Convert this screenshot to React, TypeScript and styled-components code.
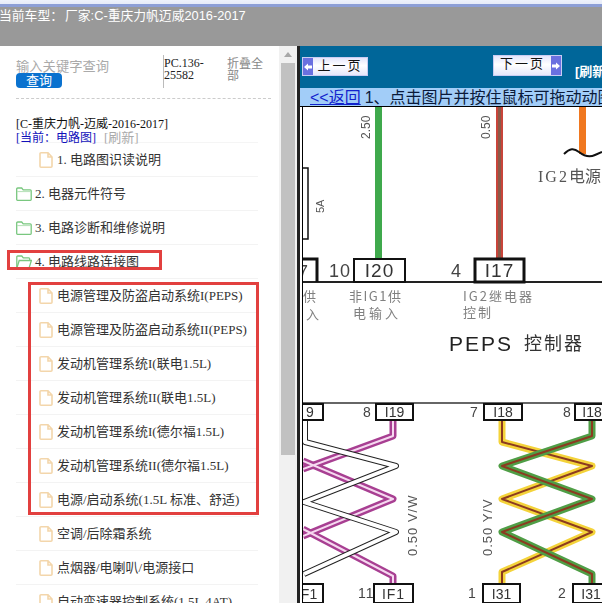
import React from "react";
import styled, { createGlobalStyle } from "styled-components";

const Global = createGlobalStyle`
  html, body { margin: 0; padding: 0; background: #fff; }
  * { box-sizing: border-box; }
`;

const SERIF = `"Liberation Serif", "Noto Sans CJK SC", serif`;
const SANS = `"Liberation Sans", "Noto Sans CJK SC", sans-serif`;

const Page = styled.div`
  width: 602px;
  height: 603px;
  overflow: hidden;
  display: flex;
  flex-direction: column;
  background: #fff;
  font-family: ${SERIF};
`;

const TopStrip = styled.div`
  height: 7px;
  flex: none;
  background: linear-gradient(#eef2fb 0, #e6ebf8 4px, #8d9fd6 4px, #8d9fd6 7px);
`;

const TopBar = styled.div`
  height: 39px;
  flex: none;
  background: #999;
  color: #fff;
  font: 12.8px/15px ${SANS};
  padding: 1px 0 0;
  white-space: nowrap;
  overflow: hidden;
`;

const TopLabel = styled.span`
  margin-left: -1px;
  display: inline-block;
  width: 66px;
`;

const Main = styled.div`
  flex: 1;
  min-height: 0;
  display: flex;
`;

const Sidebar = styled.aside`
  width: 279px;
  flex: none;
  position: relative;
  overflow: hidden;
  padding: 0 0 0 16px;
`;

const SearchRow = styled.div`
  display: flex;
  height: 52px;
  border-bottom: 1px dashed #ccc;
  width: 255px;
  box-sizing: content-box;
`;

const SearchBox = styled.div`
  width: 147px;
  padding-top: 14px;
  display: flex;
  flex-direction: column;
  align-items: flex-start;
`;

const SearchInput = styled.input`
  border: 0;
  padding: 0;
  margin: 0;
  width: 130px;
  height: 13px;
  outline: none;
  font: 13.3px/13px ${SANS};
  &::placeholder { color: #aaa; opacity: 1; }
`;

const SearchButton = styled.button`
  width: 46px;
  height: 15px;
  border: 0;
  padding: 0;
  border-radius: 4px;
  background: #0a72cf;
  color: #fff;
  font: 13px/15px ${SANS};
`;

const CodeCell = styled.div`
  width: 64px;
  height: 33px;
  margin-top: 9px;
  padding-top: 2px;
  border-left: 1px solid #bbb;
  font: 12px/12px ${SERIF};
  color: #222;
`;

const CollapseCell = styled.div`
  width: 38px;
  margin-top: 12px;
  font: 12px/12px ${SANS};
  color: #888;
`;

const Crumbs = styled.div`
  margin-top: 19px;
  height: 24px;
  font: 12px/13px ${SERIF};
  color: #111;
  white-space: nowrap;
`;

const Current = styled.span`
  color: #1111bb;
`;

const Refresh = styled.span`
  color: #aaa;
  margin-left: 8px;
  font-size: 13px;
`;

const Tree = styled.div`
  width: 242px;
  border-top: 1px solid #f5f5f5;
`;

const Row = styled.div<{ $leaf?: boolean }>`
  height: 34px;
  display: flex;
  align-items: center;
  padding-left: ${(p) => (p.$leaf ? "23px" : "0")};
  gap: ${(p) => (p.$leaf ? "4px" : "3px")};
  border-bottom: 1px solid #f3f3f3;
  font: 13px/16px ${SERIF};
  color: #333;
  white-space: nowrap;
`;

const Highlight = styled.div<{ $x: number; $y: number; $w: number; $h: number }>`
  position: absolute;
  left: ${(p) => p.$x}px;
  top: ${(p) => p.$y}px;
  width: ${(p) => p.$w}px;
  height: ${(p) => p.$h}px;
  border: 3px solid #e2403f;
`;

const Scrollbar = styled.div`
  width: 18px;
  flex: none;
  background: #f1f1f1;
  padding: 0 2px;
  display: flex;
  flex-direction: column;
`;

const ScrollUp = styled.div`
  height: 17px;
  display: flex;
  align-items: center;
  justify-content: center;
  &::before {
    content: "";
    border-left: 4px solid transparent;
    border-right: 4px solid transparent;
    border-bottom: 5px solid #a8a8a8;
  }
`;

const ScrollThumb = styled.div`
  height: 392px;
  background: #c1c1c1;
`;

const Splitter = styled.div`
  width: 3px;
  flex: none;
  background: #222;
`;

const Content = styled.section`
  flex: 1;
  min-width: 0;
  display: flex;
  flex-direction: column;
  background: #fff;
`;

const ContentHeader = styled.div`
  height: 42px;
  flex: none;
  background: #006699;
  display: flex;
  align-items: flex-start;
  padding-left: 2px;
`;

const PageButton = styled.div<{ $top: number; $width: number; $height: number; $gap?: number }>`
  margin-top: ${(p) => p.$top}px;
  margin-left: ${(p) => p.$gap ?? 0}px;
  width: ${(p) => p.$width}px;
  height: ${(p) => p.$height}px;
  display: flex;
  align-items: stretch;
  border: 1px solid #c9ccf2;
  background: linear-gradient(#e4e5fb, #ffffff 45%, #e6e7fa);
  color: #111;
  font: 13px/16px ${SANS};
  letter-spacing: 2px;
  flex: none;
`;

const PageLabel = styled.span`
  flex: 1;
  text-align: center;
`;

const PageArrow = styled.span`
  width: 10px;
  background: #6a70e0;
  display: flex;
  align-items: center;
  justify-content: center;
`;

const RefreshLink = styled.span`
  margin-left: 13px;
  margin-top: 18px;
  color: #fff;
  font: bold 13px/15px ${SANS};
  white-space: nowrap;
`;

const Notice = styled.div`
  height: 19px;
  flex: none;
  background: #a2cdf8;
  font: 16px/19px ${SANS};
  color: #0a1a3a;
  white-space: nowrap;
  overflow: hidden;
  padding-left: 10px;
  border-bottom: 1px solid #000;
`;

const BackLink = styled.a`
  color: #1122cc;
  text-decoration: underline;
  margin-right: 4px;
`;

const DiagramFrame = styled.div`
  flex: 1;
  min-height: 0;
  border-left: 1px solid #000;
  margin-left: 2px;
`;

const Diagram = styled.svg`
  display: block;
  width: 299px;
  height: 496px;
  filter: blur(0.35px);
`;

const FileIcon = () => (
  <svg width="14" height="16" viewBox="0 0 14 16" style={{ flex: "none" }}>
    <path d="M1 1.8a1 1 0 0 1 1-1H9L13 5v9.2a1 1 0 0 1-1 1H2a1 1 0 0 1-1-1z M9 1V5h4" fill="#fff" stroke="#f3d6ab" strokeWidth="1.6" />
  </svg>
);

const FolderIcon = () => (
  <svg width="16" height="14" viewBox="0 0 16 14" style={{ flex: "none" }}>
    <path d="M.7 12.5V2a1 1 0 0 1 1-1h4l1.5 1.8h7a1 1 0 0 1 1 1v8.7a.8.8 0 0 1-.8.8H1.5a.8.8 0 0 1-.8-.8z" fill="#fff" stroke="#79c77f" strokeWidth="1.3" />
    <path d="M1 4.6h14" stroke="#b5e0b8" strokeWidth="1" />
  </svg>
);

const OpenFolderIcon = () => (
  <svg width="16" height="14" viewBox="0 0 16 14" style={{ flex: "none" }}>
    <path d="M.8 12.5V2a1 1 0 0 1 1-1h4l1.5 1.8h5.4a1 1 0 0 1 1 1V5.5" fill="none" stroke="#79c77f" strokeWidth="1.3" />
    <path d="M3.2 5.5H15.4L13 13.2H.8z" fill="#fff" stroke="#79c77f" strokeWidth="1.3" />
  </svg>
);

const ArrowGlyph = ({ left }: { left?: boolean }) => (
  <svg width="8" height="8" viewBox="0 0 8 8">
    <path d={left ? "M0 4 4 .5V2.5H8V5.5H4V7.5z" : "M8 4 4 .5V2.5H0V5.5H4V7.5z"} fill="#fff" />
  </svg>
);

type Item = { label: string; kind: "file" | "folder" | "open" };

const items: Item[] = [
  { label: "1. 电路图识读说明", kind: "file" },
  { label: "2. 电器元件符号", kind: "folder" },
  { label: "3. 电路诊断和维修说明", kind: "folder" },
  { label: "4. 电路线路连接图", kind: "open" },
  { label: "电源管理及防盗启动系统I(PEPS)", kind: "file" },
  { label: "电源管理及防盗启动系统II(PEPS)", kind: "file" },
  { label: "发动机管理系统I(联电1.5L)", kind: "file" },
  { label: "发动机管理系统II(联电1.5L)", kind: "file" },
  { label: "发动机管理系统I(德尔福1.5L)", kind: "file" },
  { label: "发动机管理系统II(德尔福1.5L)", kind: "file" },
  { label: "电源/启动系统(1.5L 标准、舒适)", kind: "file" },
  { label: "空调/后除霜系统", kind: "file" },
  { label: "点烟器/电喇叭/电源接口", kind: "file" },
  { label: "自动变速器控制系统(1.5L 4AT)", kind: "file" },
];

const Wire = ({ d, outer, inner, w = 7, iw = 2 }: { d: string; outer: string; inner: string; w?: number; iw?: number }) => (
  <>
    <path d={d} fill="none" stroke={outer} strokeWidth={w} strokeLinejoin="round" />
    <path d={d} fill="none" stroke={inner} strokeWidth={iw} strokeLinejoin="round" />
  </>
);

const Pin = ({ x, y, w, h, label, sw = 2, fs = 14, ls = 0 }: { x: number; y: number; w: number; h: number; label: string; sw?: number; fs?: number; ls?: number }) => (
  <>
    <rect x={x} y={y} width={w} height={h} fill="#fff" stroke="#111" strokeWidth={sw} />
    <text x={x + w / 2} y={y + h / 2 + fs * 0.36} fontSize={fs} textAnchor="middle" fill="#333" letterSpacing={ls} fontFamily="Liberation Sans">{label}</text>
  </>
);

const Num = ({ x, y, t, fs = 14 }: { x: number; y: number; t: string; fs?: number }) => (
  <text x={x} y={y} fontSize={fs} fill="#444" fontFamily="Liberation Sans" letterSpacing="1">{t}</text>
);

const Vert = ({ x, y, t, fs = 12, ls = 0 }: { x: number; y: number; t: string; fs?: number; ls?: number }) => (
  <text transform={`translate(${x} ${y}) rotate(-90)`} fontSize={fs} fill="#555" fontFamily="Liberation Sans" letterSpacing={ls}>{t}</text>
);

const Label = ({ x, y, t, fs = 13, ls = 1.5 }: { x: number; y: number; t: string; fs?: number; ls?: number }) => (
  <text x={x} y={y} fontSize={fs} fill="#808080" fontFamily="Noto Sans CJK SC" letterSpacing={ls}>{t}</text>
);

export default function App() {
  return (
    <Page>
      <Global />
      <TopStrip />
      <TopBar>
        <TopLabel>当前车型：</TopLabel>厂家:C-重庆力帆迈威2016-2017
      </TopBar>
      <Main>
        <Sidebar>
          <SearchRow>
            <SearchBox>
              <SearchInput placeholder="输入关键字查询" readOnly />
              <SearchButton>查询</SearchButton>
            </SearchBox>
            <CodeCell>PC.136-<br />25582</CodeCell>
            <CollapseCell>折叠全部</CollapseCell>
          </SearchRow>
          <Crumbs>
            [C-重庆力帆-迈威-2016-2017]<br />
            <Current>[当前：电路图]</Current>
            <Refresh>[刷新]</Refresh>
          </Crumbs>
          <Tree>
            {items.map((it) => (
              <Row key={it.label} $leaf={it.kind === "file"}>
                {it.kind === "file" ? <FileIcon /> : it.kind === "folder" ? <FolderIcon /> : <OpenFolderIcon />}
                <span>{it.label}</span>
              </Row>
            ))}
          </Tree>
          <Highlight $x={7} $y={204} $w={155} $h={20} />
          <Highlight $x={28} $y={236} $w={231} $h={233} />
        </Sidebar>
        <Scrollbar>
          <ScrollUp />
          <ScrollThumb />
        </Scrollbar>
        <Splitter />
        <Content>
          <ContentHeader>
            <PageButton $top={11} $width={66} $height={19}>
              <PageArrow><ArrowGlyph left /></PageArrow>
              <PageLabel>上一页</PageLabel>
            </PageButton>
            <PageButton $top={9} $width={69} $height={21} $gap={125}>
              <PageLabel>下一页</PageLabel>
              <PageArrow><ArrowGlyph /></PageArrow>
            </PageButton>
            <RefreshLink>[刷新]</RefreshLink>
          </ContentHeader>
          <Notice>
            <BackLink>&lt;&lt;返回</BackLink>1、点击图片并按住鼠标可拖动动图
          </Notice>
          <DiagramFrame>
            <Diagram viewBox="303 108 299 496">
              <rect x="375" y="108" width="7" height="152" fill="#3fa94c" />
              <rect x="496" y="108" width="7" height="152" fill="#c8443a" />
              <rect x="498" y="108" width="3" height="152" fill="#8a5a48" />
              <rect x="579" y="108" width="7" height="47" fill="#f07820" />
              <path d="M564 155c6-6 10-6 15-2s10 6 16 3l7-3" fill="none" stroke="#111" strokeWidth="2" />
              <Vert x={370} y={140} t="2.50" />
              <Vert x={490} y={140} t="0.50" />
              <text x="538" y="183" fontSize="16" fill="#555" fontFamily="Liberation Serif" letterSpacing="2">IG2<tspan fontFamily="Noto Sans CJK SC" letterSpacing="0">电源</tspan></text>
              <path d="M303 169h5v71h-5" fill="none" stroke="#111" strokeWidth="1.5" />
              <Vert x={324} y={214} t="5A" fs={11} />

              <path d="M303 283H602" stroke="#222" strokeWidth="2" />
              <Num x={298} y={279} t="7" fs={18} />
              <path d="M303 260h14v23" fill="none" stroke="#111" strokeWidth="3" />
              <Num x={329} y={278} t="10" fs={18} />
              <Pin x={354} y={260} w={51} h={23} label="I20" fs={19} ls={1} />
              <Num x={451} y={278} t="4" fs={18} />
              <Pin x={475} y={260} w={49} h={23} label="I17" sw={3} fs={19} ls={1} />

              <Label x={303} y={302} t="供" />
              <Label x={306} y={320} t="入" />
              <Label x={349} y={302} t="非IG1供" />
              <Label x={353} y={319} t="电输入" ls={3} />
              <Label x={463} y={302} t="IG2继电器" ls={2} />
              <Label x={463} y={318} t="控制" ls={2} />
              <text x="449" y="352" fontSize="21" fill="#222" fontFamily="Liberation Sans" letterSpacing="2">PEPS</text>
              <text x="524" y="351" fontSize="18" fill="#333" fontFamily="Noto Sans CJK SC" letterSpacing="2">控制器</text>

              <Wire d="M393 422V437L303 470M303 462L393 500L303 537M303 530L393 577V586" outer="#a83f92" inner="#f6d9f0" />
              <Wire d="M305 421V443L396 467L304 503L396 533L304 575" outer="#222" inner="#fff" w={6} iw={4} />
              <Wire d="M502 422V443L592 467L502 500L592 533L502 573V586" outer="#f4d33a" inner="#8c3a20" />
              <Wire d="M592 422V437L502 467L592 500L502 533L592 575V586" outer="#4f9e46" inner="#8c3a20" />

              <path d="M303 404H602" stroke="#333" strokeWidth="1.5" />
              <Pin x={297} y={405} w={26} h={16} label="9" />
              <Num x={363} y={418} t="8" />
              <Pin x={376} y={405} w={37} h={16} label="I19" />
              <Num x={470} y={418} t="7" />
              <Pin x={484} y={405} w={38} h={16} label="I18" />
              <Num x={563} y={418} t="8" />
              <Pin x={575} y={405} w={34} h={16} label="I18" />

              <Vert x={417} y={557} t="0.50  V/W" fs={13} ls={1} />
              <Vert x={492} y={557} t="0.50  Y/V" fs={13} ls={1} />

              <Pin x={295} y={585} w={28} h={19} label="F1" />
              <Num x={358} y={599} t="11" />
              <Pin x={374} y={585} w={39} h={19} label="IF1" ls={1} />
              <Num x={468} y={599} t="1" />
              <Pin x={483} y={585} w={37} h={19} label="I31" />
              <Num x={558} y={599} t="2" />
              <Pin x={573} y={585} w={36} h={19} label="I31" />
            </Diagram>
          </DiagramFrame>
        </Content>
      </Main>
    </Page>
  );
}
